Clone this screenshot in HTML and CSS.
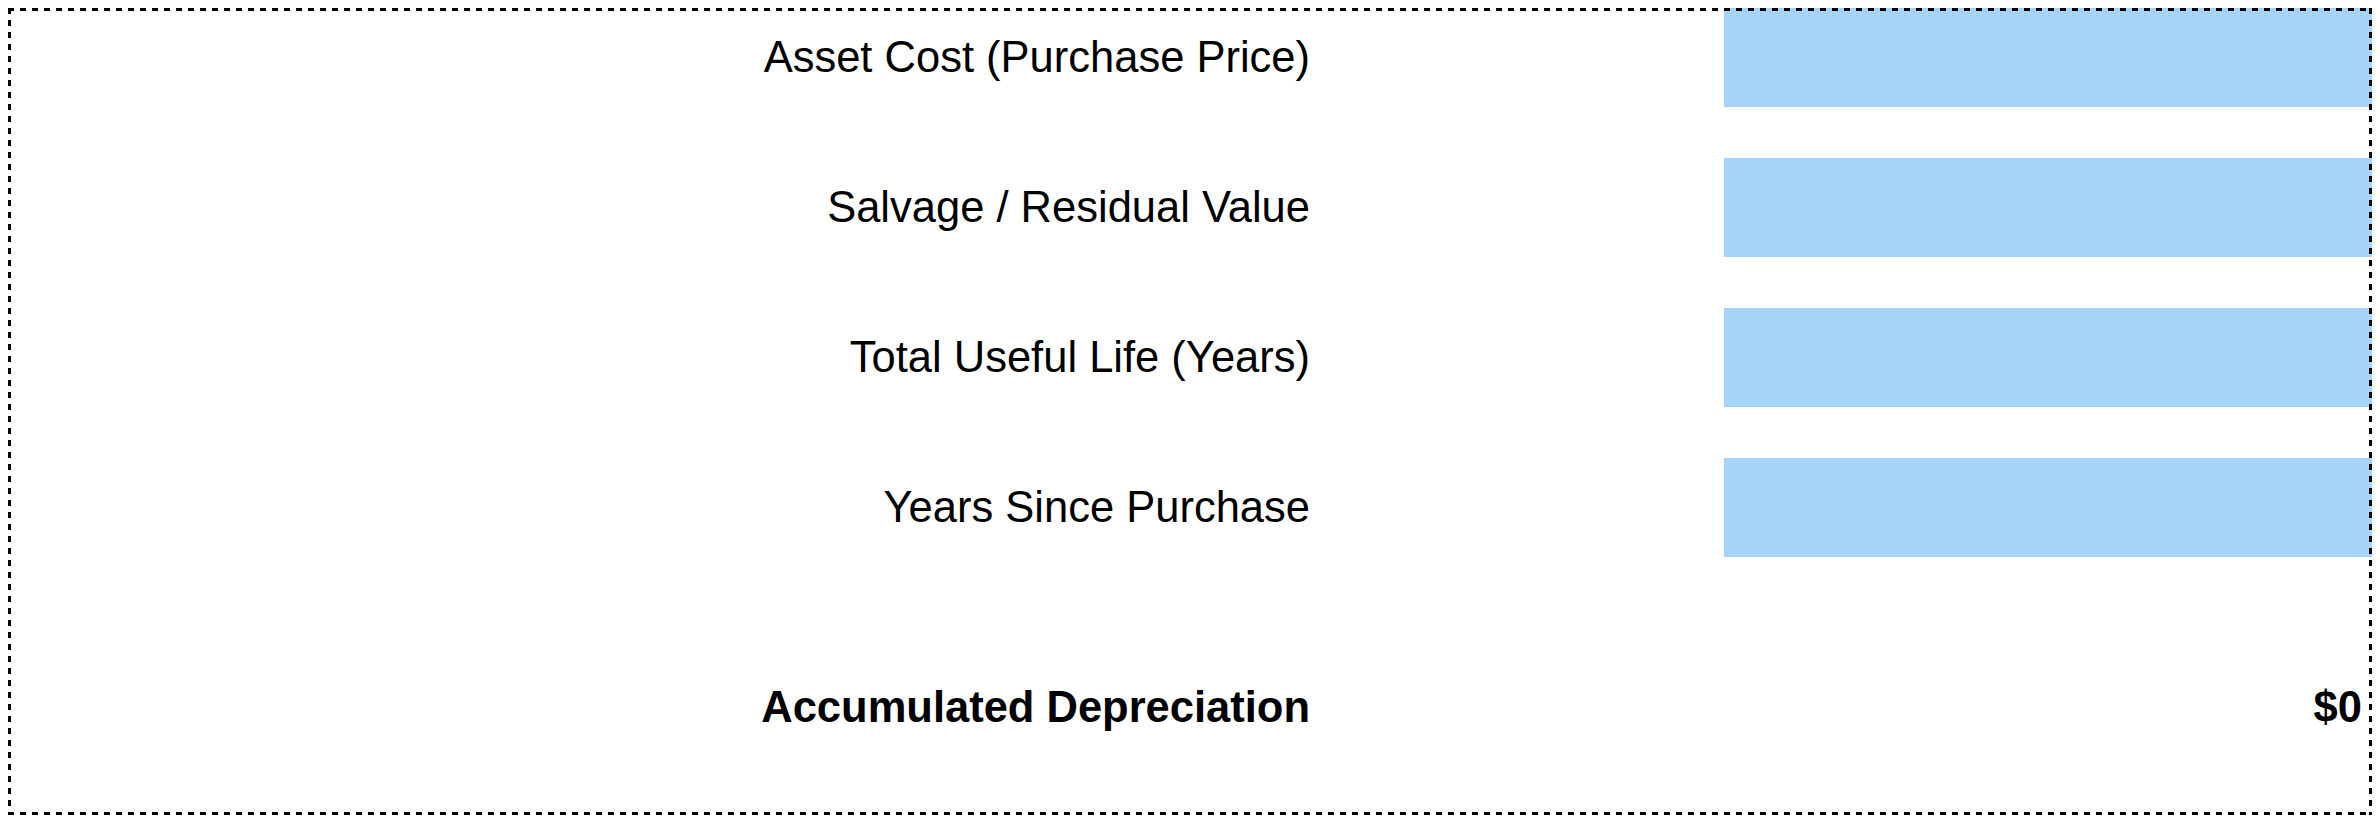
FILE: index.html
```html
<!DOCTYPE html>
<html lang="en">
<head>
<meta charset="utf-8">
<title>Accumulated Depreciation Calculator</title>
<link rel="stylesheet" href="styles.css">
</head>
<body>
  <form class="calc">
    <div class="row">
      <label class="label" for="cost">Asset Cost (Purchase Price)</label>
      <input class="field" id="cost" type="text">
    </div>
    <div class="row">
      <label class="label" for="salvage">Salvage / Residual Value</label>
      <input class="field" id="salvage" type="text">
    </div>
    <div class="row">
      <label class="label" for="life">Total Useful Life (Years)</label>
      <input class="field" id="life" type="text">
    </div>
    <div class="row">
      <label class="label" for="years">Years Since Purchase</label>
      <input class="field" id="years" type="text">
    </div>
    <div class="row result">
      <span class="label">Accumulated Depreciation</span>
      <output class="value">$0</output>
    </div>
  </form>
</body>
</html>
```

FILE: styles.css
```css
html, body {
  background: #ffffff;
}

body {
  margin: 8px;
  font-family: "Liberation Sans", Arial, sans-serif;
  font-size: 43.5px;
  color: #000000;
}

.calc {
  position: relative;
  display: flex;
  flex-direction: column;
  gap: 51px;
  padding-bottom: 58px;
}

/* dashed frame (3px strokes, 6px dashes) drawn on top of the fields */
.calc::after {
  content: "";
  position: absolute;
  inset: 0;
  pointer-events: none;
  background:
    linear-gradient(to right, #000 50%, transparent 0) top left / 12px 3px repeat-x,
    linear-gradient(to right, #000 50%, transparent 0) bottom left / 12px 3px repeat-x,
    linear-gradient(to bottom, #000 50%, transparent 0) top left / 3px 12px repeat-y,
    linear-gradient(to bottom, #000 50%, transparent 0) top right / 3px 12px repeat-y;
}

.row {
  display: grid;
  grid-template-columns: 1302px 1fr 648px;
  align-items: center;
  height: 99px;
}

.label {
  grid-column: 1;
  text-align: right;
  white-space: nowrap;
}

.field {
  grid-column: 3;
  box-sizing: border-box;
  width: 100%;
  height: 99px;
  margin: 0;
  padding: 0 10px;
  border: none;
  background: #a6d3fa;
  font: inherit;
}

.result {
  margin-top: 50px;
  font-weight: 700;
}

.value {
  grid-column: 3;
  text-align: right;
  padding-right: 10px;
}
```
